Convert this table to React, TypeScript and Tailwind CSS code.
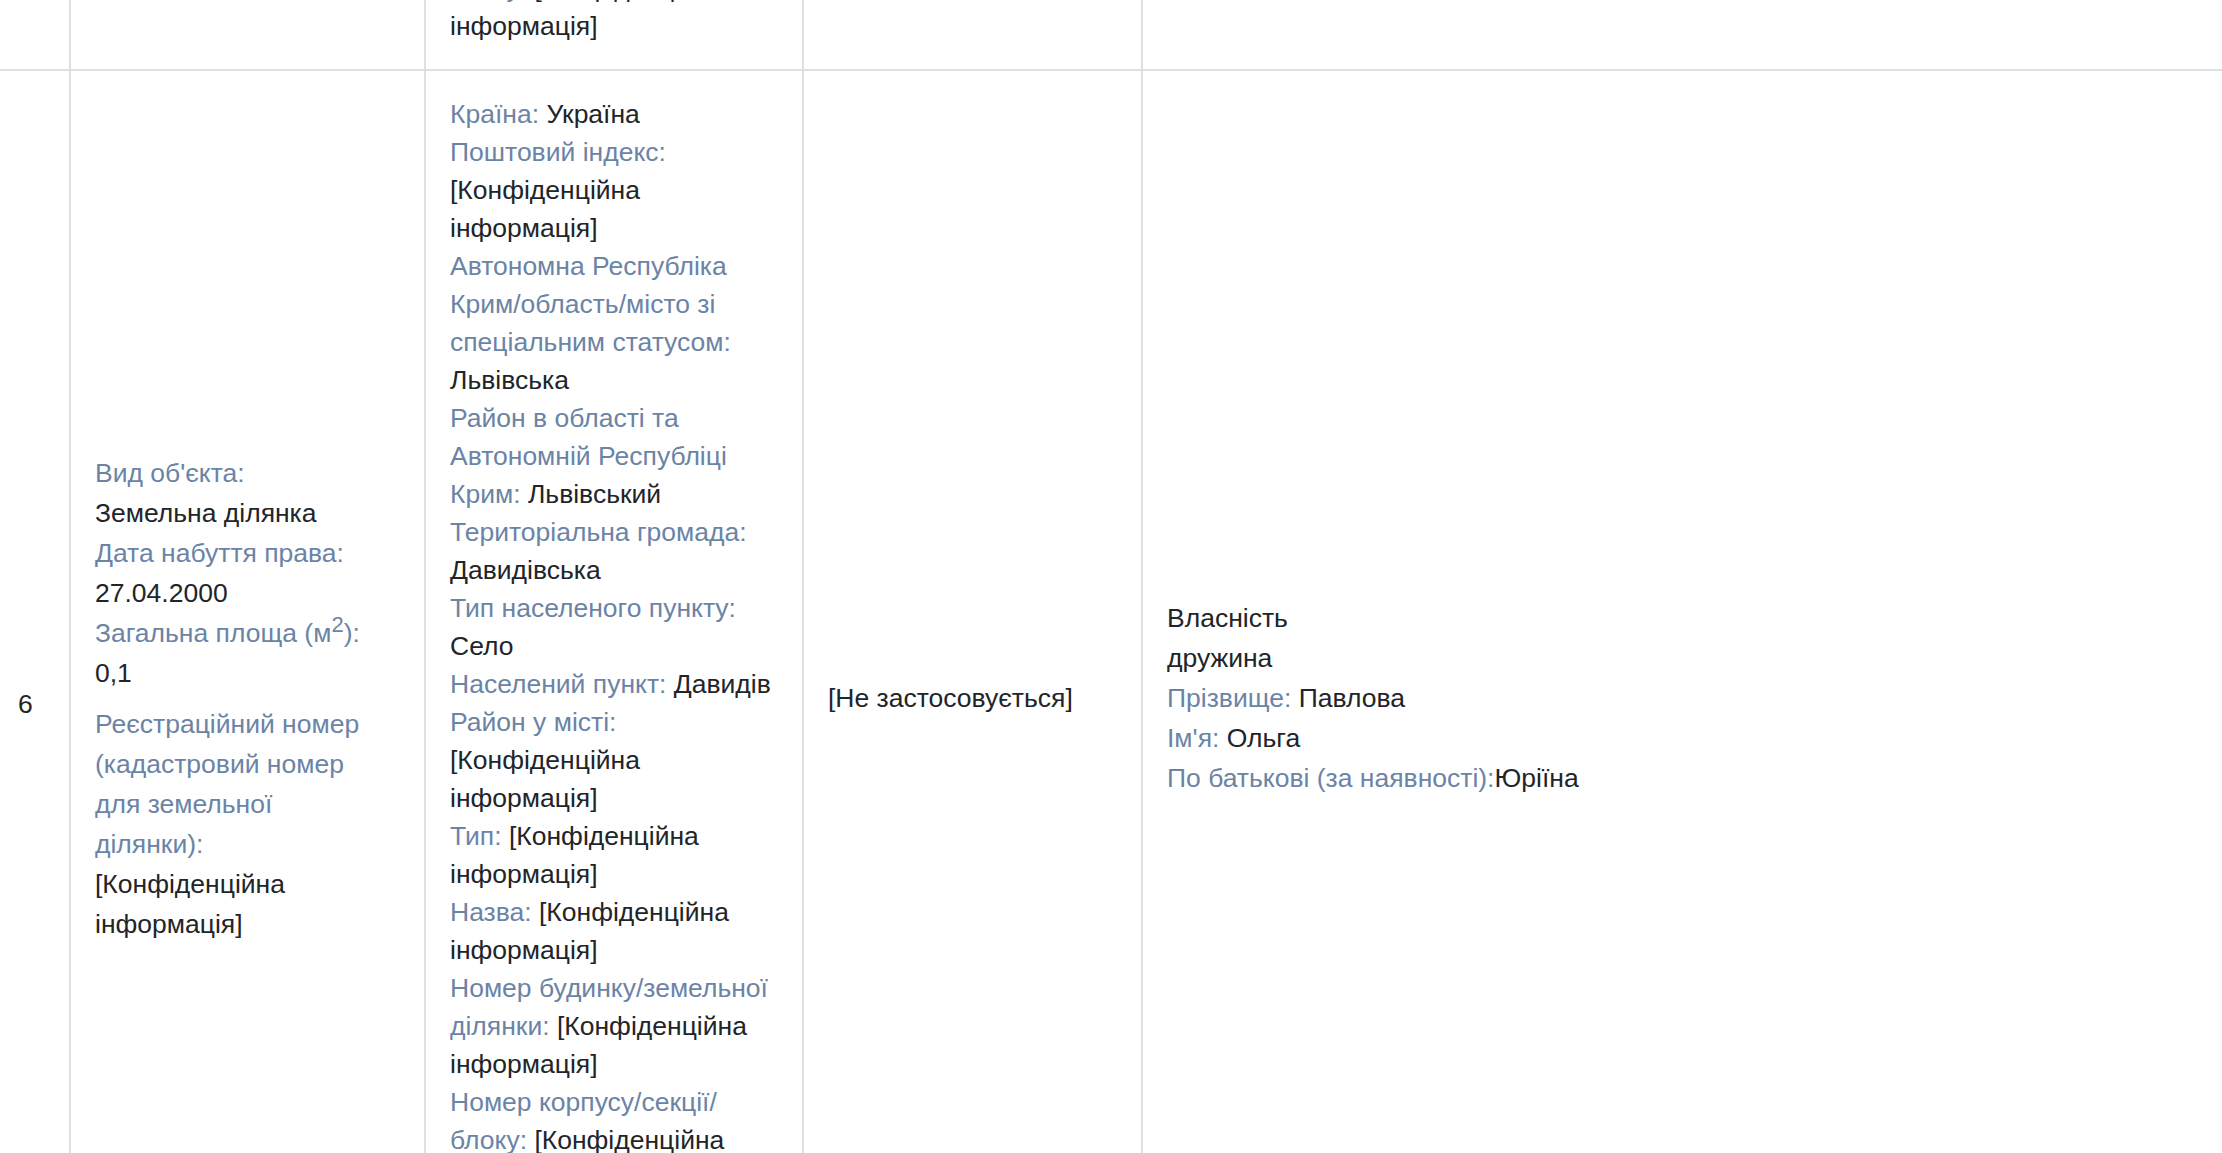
import React from 'react';

type Line = { label?: string; value?: string };

const Lbl: React.FC<{ children: React.ReactNode }> = ({ children }) => (
  <span className="text-[#6b84a6]">{children}</span>
);

const ADDRESS: Line[] = [
  { label: 'Країна:', value: 'Україна' },
  { label: 'Поштовий індекс:' },
  { value: '[Конфіденційна' },
  { value: 'інформація]' },
  { label: 'Автономна Республіка' },
  { label: 'Крим/область/місто зі' },
  { label: 'спеціальним статусом:' },
  { value: 'Львівська' },
  { label: 'Район в області та' },
  { label: 'Автономній Республіці' },
  { label: 'Крим:', value: 'Львівський' },
  { label: 'Територіальна громада:' },
  { value: 'Давидівська' },
  { label: 'Тип населеного пункту:' },
  { value: 'Село' },
  { label: 'Населений пункт:', value: 'Давидів' },
  { label: 'Район у місті:' },
  { value: '[Конфіденційна' },
  { value: 'інформація]' },
  { label: 'Тип:', value: '[Конфіденційна' },
  { value: 'інформація]' },
  { label: 'Назва:', value: '[Конфіденційна' },
  { value: 'інформація]' },
  { label: 'Номер будинку/земельної' },
  { label: 'ділянки:', value: '[Конфіденційна' },
  { value: 'інформація]' },
  { label: 'Номер корпусу/секції/' },
  { label: 'блоку:', value: '[Конфіденційна' },
  { value: 'інформація]' },
  { label: 'Номер квартири/' },
  { label: 'приміщення:', value: '[Конфіденційна' },
  { value: 'інформація]' },
];

const Lines: React.FC<{ lines: Line[] }> = ({ lines }) => (
  <>
    {lines.map((l, i) => (
      <div key={i} className="whitespace-nowrap">
        {l.label && <Lbl>{l.label}</Lbl>}
        {l.label && l.value ? ' ' : ''}
        {l.value}
      </div>
    ))}
  </>
);

const App: React.FC = () => {
  return (
    <div
      className="h-[1153px] w-full overflow-hidden bg-white text-[#212529] text-[26.5px]"
      style={{ fontFamily: '"Liberation Sans", Arial, sans-serif' }}
    >
      <table className="-mt-[93px] w-full table-fixed border-collapse">
        <colgroup>
          <col className="w-[70px]" />
          <col className="w-[355px]" />
          <col className="w-[378px]" />
          <col className="w-[339px]" />
          <col />
        </colgroup>
        <tbody>
          <tr className="border-b-2 border-[#dde1e6]">
            <td className="border-r-2 border-[#dde1e6]" />
            <td className="border-r-2 border-[#dde1e6]" />
            <td className="border-r-2 border-[#dde1e6] px-6 pt-[24px] pb-[24px] align-top leading-[38px]">
              <Lines
                lines={[
                  { label: 'Номер корпусу/секції/' },
                  { label: 'блоку:', value: '[Конфіденційна' },
                  { value: 'інформація]' },
                ]}
              />
            </td>
            <td className="border-r-2 border-[#dde1e6]" />
            <td />
          </tr>

          <tr className="h-[1256px] border-b-2 border-[#dde1e6]">
            <td className="border-r-2 border-[#dde1e6] pl-[18px] pt-[12px] align-middle leading-[38px]">6</td>

            <td className="border-r-2 border-[#dde1e6] px-6 align-middle leading-[40px]">
              <Lines
                lines={[
                  { label: "Вид об'єкта:" },
                  { value: 'Земельна ділянка' },
                  { label: 'Дата набуття права:' },
                  { value: '27.04.2000' },
                ]}
              />
              <div className="whitespace-nowrap">
                <Lbl>
                  Загальна площа (м<sup className="text-[22px] -top-[0.45em]">2</sup>):
                </Lbl>
              </div>
              <div>0,1</div>
              <div className="mt-[11px]">
                <Lines
                  lines={[
                    { label: 'Реєстраційний номер' },
                    { label: '(кадастровий номер' },
                    { label: 'для земельної' },
                    { label: 'ділянки):' },
                    { value: '[Конфіденційна' },
                    { value: 'інформація]' },
                  ]}
                />
              </div>
            </td>

            <td className="border-r-2 border-[#dde1e6] px-6 pt-[24px] align-top leading-[38px]">
              <Lines lines={ADDRESS} />
            </td>

            <td className="border-r-2 border-[#dde1e6] px-6 align-middle leading-[38px]">
              [Не застосовується]
            </td>

            <td className="px-6 align-middle leading-[40px]">
              <div>Власність</div>
              <div>дружина</div>
              <div>
                <Lbl>Прізвище:</Lbl> Павлова
              </div>
              <div>
                <Lbl>Ім'я:</Lbl> Ольга
              </div>
              <div className="whitespace-nowrap">
                <Lbl>По батькові (за наявності):</Lbl>Юріїна
              </div>
            </td>
          </tr>
        </tbody>
      </table>
    </div>
  );
};

export default App;
